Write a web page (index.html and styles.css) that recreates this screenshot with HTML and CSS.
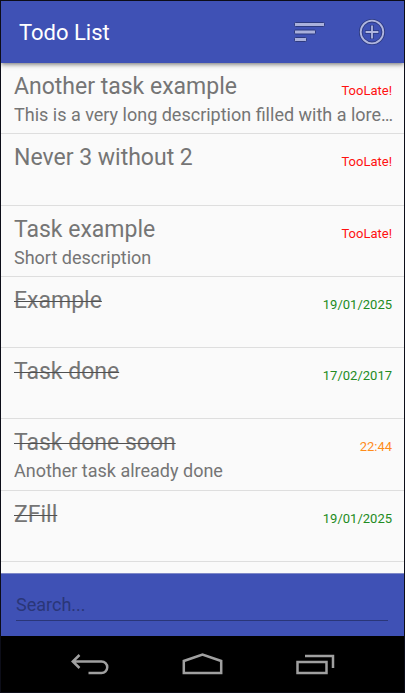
FILE: index.html
```html
<!DOCTYPE html>
<html lang="en">
<head>
<meta charset="utf-8">
<meta name="viewport" content="width=device-width, initial-scale=1">
<title>Todo List</title>
<link rel="stylesheet" href="styles.css">
</head>
<body>
<header class="app-bar">
  <h1 class="app-title">Todo List</h1>
  <button class="icon-button" type="button" aria-label="Sort">
    <svg width="32" height="24" viewBox="0 0 32 24">
      <g fill="#a9b0dc" stroke="#2d3a80" stroke-width="1">
        <rect x="1.5" y="2.5" width="30" height="4" rx="1"/>
        <rect x="1.5" y="10" width="21" height="4" rx="1"/>
        <rect x="1.5" y="17.5" width="12" height="4" rx="1"/>
      </g>
    </svg>
  </button>
  <button class="icon-button" type="button" aria-label="Add task">
    <svg width="28" height="28" viewBox="0 0 28 28" fill="none">
      <g stroke="#2d3a80" stroke-width="3.6"><circle cx="14" cy="14" r="11.3"/><path d="M14 7v14M7 14h14"/></g>
      <g stroke="#b0b6df" stroke-width="1.8"><circle cx="14" cy="14" r="11.3"/><path d="M14 7.6v12.8M7.6 14h12.8"/></g>
    </svg>
  </button>
</header>
<main class="content">
  <ul class="tasks">
    <li class="task"><h2 class="name">Another task example</h2><span class="due late">TooLate!</span><p class="description">This is a very long description filled with a lorem ipsum</p></li>
    <li class="task"><h2 class="name">Never 3 without 2</h2><span class="due late">TooLate!</span></li>
    <li class="task"><h2 class="name">Task example</h2><span class="due late">TooLate!</span><p class="description">Short description</p></li>
    <li class="task"><h2 class="name done">Example</h2><span class="due">19/01/2025</span></li>
    <li class="task"><h2 class="name done">Task done</h2><span class="due">17/02/2017</span></li>
    <li class="task"><h2 class="name done">Task done soon</h2><span class="due soon">22:44</span><p class="description">Another task already done</p></li>
    <li class="task"><h2 class="name done">ZFill</h2><span class="due">19/01/2025</span></li>
  </ul>
</main>
<form class="search">
  <input class="search-input" type="text" placeholder="Search..." aria-label="Search tasks">
</form>
<nav class="nav-bar">
  <button class="icon-button" type="button" aria-label="Back">
    <svg width="40" height="24" viewBox="0 0 40 24" fill="none" stroke="#a0a0a0" stroke-width="2.5">
      <path d="M9.500 3L2.800 9.500l6.700 6.500M2.800 9.500H31.500a5.500 5.500 0 0 1 0 11.500H18.500"/>
    </svg>
  </button>
  <button class="icon-button" type="button" aria-label="Home">
    <svg width="44" height="24" viewBox="0 0 44 24" fill="none" stroke="#a0a0a0" stroke-width="2.5">
      <path d="M2.800 21V9L21.500 2.500 40.200 9v12z"/>
    </svg>
  </button>
  <button class="icon-button" type="button" aria-label="Recent apps">
    <svg width="40" height="24" viewBox="0 0 40 24" fill="none" stroke="#a0a0a0" stroke-width="2.5">
      <path d="M1.500 10h29v11h-29zM9 4H37v12"/>
    </svg>
  </button>
</nav>
</body>
</html>
```
FILE: styles.css
```css
* {
  box-sizing: border-box;
}

body {
  display: flex;
  flex-direction: column;
  min-height: 100vh;
  margin: 0;
  border: 1px solid #0c0d18;
  background: #fafafa;
  color: #757575;
  font-family: Roboto, "Liberation Sans", sans-serif;
}

.app-bar {
  display: flex;
  align-items: center;
  gap: 33px;
  height: 62px;
  padding: 0 18px;
  background: #3f51b5;
  box-shadow: 0 1px 5px rgba(0, 0, 0, 0.6);
}

.app-title {
  flex: 1;
  margin: 0;
  padding-top: 2px;
  color: #fff;
  font-size: 22px;
  font-weight: 400;
  line-height: 28px;
}

.icon-button {
  display: flex;
  padding: 0;
  border: 0;
  background: none;
}

.content {
  display: flex;
  flex: 1;
  padding-bottom: 11px;
}

.tasks {
  display: grid;
  flex: 1;
  grid-auto-rows: minmax(70px, 1fr);
  min-width: 0;
  margin: 0;
  padding: 0;
  list-style: none;
}

.task {
  display: grid;
  grid-template-columns: 1fr auto;
  align-content: start;
  padding: 9px 9px 0 13px;
  border-bottom: 1px solid #dedede;
}

.name {
  margin: 0;
  font-size: 23px;
  font-weight: 400;
  line-height: 30px;
}

.done {
  text-decoration: line-through #505050 1px;
}

.due {
  align-self: end;
  padding-right: 3px;
  color: #228b22;
  font-size: 13px;
  line-height: 22px;
}

.late {
  color: #f11;
}

.soon {
  color: #ff8c1a;
}

.description {
  grid-column: 1 / -1;
  min-width: 0;
  margin: 0;
  overflow: hidden;
  font-size: 18px;
  line-height: 26px;
  text-overflow: ellipsis;
  white-space: nowrap;
}

.search {
  display: flex;
  align-items: flex-end;
  height: 63px;
  padding: 0 16px 15px 15px;
  border-top: 1px solid #7f89c8;
  background: #3f51b5;
}

.search-input {
  flex: 1;
  min-width: 0;
  height: 32px;
  padding: 0;
  border: 0;
  border-bottom: 1px solid #2a3678;
  background: none;
  color: #2a3678;
  font: 18px Roboto, "Liberation Sans", sans-serif;
}

.search-input::placeholder {
  color: #2a3678;
  opacity: 1;
}

.nav-bar {
  display: flex;
  align-items: center;
  justify-content: center;
  gap: 71px;
  height: 56px;
  background: #000;
}
```
